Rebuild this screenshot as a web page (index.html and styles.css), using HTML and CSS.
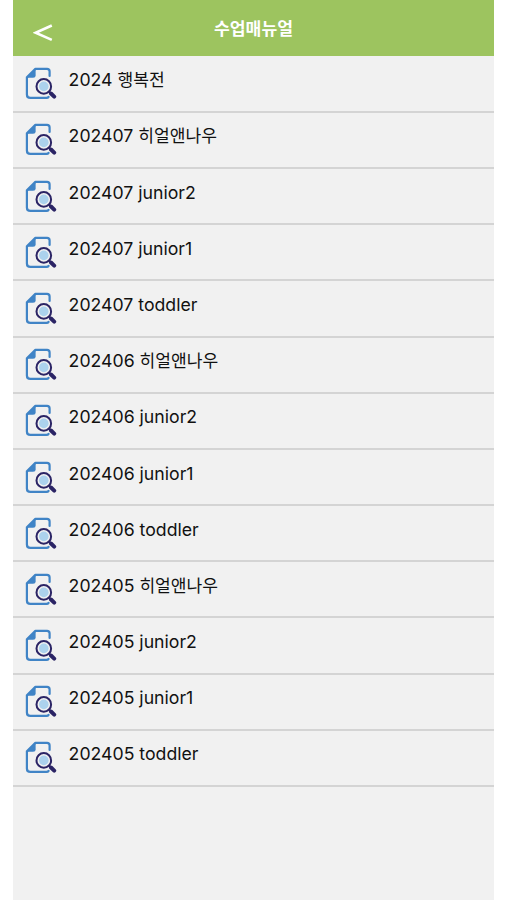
FILE: index.html
```html
<!DOCTYPE html>
<html lang="ko">
<head>
<meta charset="utf-8">
<title>수업매뉴얼</title>
<link rel="stylesheet" href="styles.css">
</head>
<body>
<svg class="defs" width="0" height="0" aria-hidden="true">
  <symbol id="doc" viewBox="0 0 32 33">
    <path d="M24.6 9V4.5Q24.6 1.9 22 1.9H10.4L1.9 10.4V27.4Q1.9 30.9 5.4 30.9H21.5Q23 30.9 23.6 29.9" fill="none" stroke="#4084c6" stroke-width="2.2" stroke-linejoin="round" stroke-linecap="round"/>
    <path d="M10.6 1.9V8.3Q10.6 10.8 8 10.8H1.9Z" fill="#4084c6"/>
    <circle cx="18.8" cy="19.4" r="7.3" fill="#f1f1f1" stroke="#2b2465" stroke-width="2"/>
    <circle cx="18.8" cy="19.4" r="4.8" fill="#acd2ed"/>
    <path d="M24 24.6L26 26.5" stroke="#2b2465" stroke-width="2.4"/>
    <path d="M26 26.5L29.2 29.6" stroke="#2b2465" stroke-width="4" stroke-linecap="round"/>
  </symbol>
</svg>
<main class="app">
  <header class="header">
    <svg class="back" viewBox="0 0 20 18"><path d="M18.8 1.5L2.6 8.7L18.8 15.9" fill="none" stroke="#fff" stroke-width="2.6"/></svg>
    <h1 class="title">수업매뉴얼</h1>
  </header>
  <ul class="list">
    <li class="row"><svg class="icon"><use href="#doc"/></svg><span class="label">2024 <span class="ko">행복전</span></span></li>
    <li class="row"><svg class="icon"><use href="#doc"/></svg><span class="label">202407 <span class="ko">히얼앤나우</span></span></li>
    <li class="row"><svg class="icon"><use href="#doc"/></svg><span class="label">202407 junior2</span></li>
    <li class="row"><svg class="icon"><use href="#doc"/></svg><span class="label">202407 junior1</span></li>
    <li class="row"><svg class="icon"><use href="#doc"/></svg><span class="label">202407 toddler</span></li>
    <li class="row"><svg class="icon"><use href="#doc"/></svg><span class="label">202406 <span class="ko">히얼앤나우</span></span></li>
    <li class="row"><svg class="icon"><use href="#doc"/></svg><span class="label">202406 junior2</span></li>
    <li class="row"><svg class="icon"><use href="#doc"/></svg><span class="label">202406 junior1</span></li>
    <li class="row"><svg class="icon"><use href="#doc"/></svg><span class="label">202406 toddler</span></li>
    <li class="row"><svg class="icon"><use href="#doc"/></svg><span class="label">202405 <span class="ko">히얼앤나우</span></span></li>
    <li class="row"><svg class="icon"><use href="#doc"/></svg><span class="label">202405 junior2</span></li>
    <li class="row"><svg class="icon"><use href="#doc"/></svg><span class="label">202405 junior1</span></li>
    <li class="row"><svg class="icon"><use href="#doc"/></svg><span class="label">202405 toddler</span></li>
  </ul>
</main>
</body>
</html>
```
FILE: styles.css
```css
* { box-sizing: border-box; }
body {
  margin: 0;
  background: #fff;
  font-family: Inter, "Noto Sans CJK KR", sans-serif;
  color: #111;
}
.defs { display: block; }
.app {
  width: 481px;
  height: 900px;
  margin-left: 13px;
  background: #f1f1f1;
  overflow: hidden;
}
.header {
  display: grid;
  grid-template-columns: 60px 1fr 60px;
  height: 56px;
  background: #9dc45f;
}
.back {
  width: 20px;
  height: 18px;
  margin: 24px 0 0 20px;
}
.title {
  margin: 0;
  padding-top: 1px;
  line-height: 56px;
  text-align: center;
  font-size: 17.2px;
  font-weight: 700;
  color: #fff;
}
.list {
  margin: 0;
  padding: 0.6px 0 0;
  list-style: none;
}
.row {
  display: flex;
  height: 56.2px;
  padding: 10.6px 0 0 12px;
  border-bottom: 2px solid #d4d4d4;
}
.icon {
  flex: none;
  width: 32px;
  height: 33px;
}
.label {
  margin: 1px 0 0 11.6px;
  line-height: 24px;
  height: 24px;
  font-size: 17.7px;
  white-space: nowrap;
}
.ko { font-size: 17.1px; }
```
